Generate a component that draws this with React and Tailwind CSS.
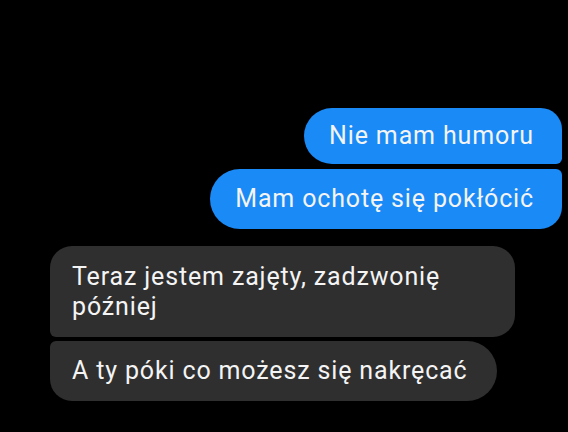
import React from "react";

export default function App() {
  return (
    <div className="w-[568px] h-[432px] bg-black overflow-hidden pt-[108px] text-[25px] leading-[30px] tracking-[0.85px] text-[#f4f4f4]" style={{ fontFamily: "Roboto, 'Noto Sans', sans-serif" }}>
      <div className="flex flex-col items-end gap-[5px] pr-[6px]">
        <div className="bg-[#1a8af6] pl-[25px] pr-[28px] py-[13px] rounded-l-[29px] rounded-tr-[22px] rounded-br-[6px]">
          Nie mam humoru
        </div>
        <div className="bg-[#1a8af6] pl-[25px] pr-[28px] py-[15px] rounded-l-[30px] rounded-tr-[6px] rounded-br-[22px]">
          Mam ochotę się pokłócić
        </div>
      </div>
      <div className="flex flex-col items-start gap-[4px] pl-[50px] mt-[17px]">
        <div className="w-[465px] bg-[#2f2f2f] pl-[22px] pr-[24px] pt-[16px] pb-[15px] rounded-r-[22px] rounded-tl-[22px] rounded-bl-[6px]">
          Teraz jestem zajęty, zadzwonię później
        </div>
        <div className="bg-[#2f2f2f] pl-[22px] pr-[30px] py-[15px] rounded-r-[30px] rounded-tl-[6px] rounded-bl-[22px]">
          A ty póki co możesz się nakręcać
        </div>
      </div>
    </div>
  );
}
